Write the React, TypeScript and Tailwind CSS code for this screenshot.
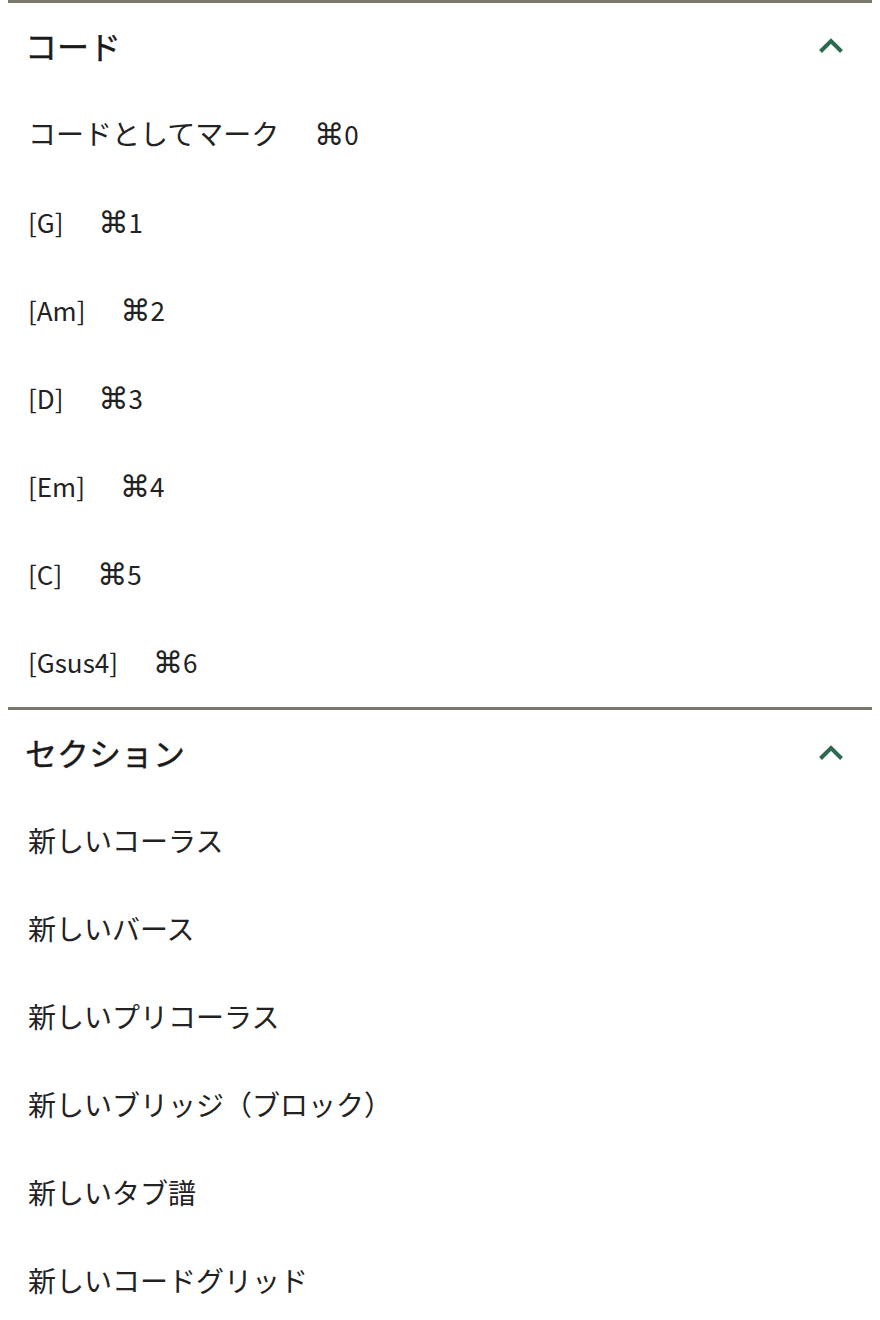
const chords = [
  { label: "コードとしてマーク", key: "0" },
  { label: "[G]", key: "1" },
  { label: "[Am]", key: "2" },
  { label: "[D]", key: "3" },
  { label: "[Em]", key: "4" },
  { label: "[C]", key: "5" },
  { label: "[Gsus4]", key: "6" },
];

const sections = [
  "新しいコーラス",
  "新しいバース",
  "新しいプリコーラス",
  "新しいブリッジ（ブロック）",
  "新しいタブ譜",
  "新しいコードグリッド",
];

function ChevronUp() {
  return (
    <svg width="26" height="17" viewBox="0 0 26 17" fill="none">
      <path d="M2.5 14.5 L13 4 L23.5 14.5" stroke="#2b6a4c" strokeWidth="4" strokeLinejoin="miter" />
    </svg>
  );
}

function Section({ title, children }: { title: string; children: React.ReactNode }) {
  return (
    <section className="border-t-[3px] border-[#7b776e]">
      <div className="flex h-[88px] items-center justify-between pb-1 pl-[17px] pr-7">
        <h2 className="text-[32px] font-normal text-[#1a1a1a] [-webkit-text-stroke:0.4px_#1a1a1a]">{title}</h2>
        <ChevronUp />
      </div>
      <ul>{children}</ul>
    </section>
  );
}

export default function App() {
  return (
    <div
      className="min-h-[1320px] bg-white px-2 text-[#222]"
      style={{ fontFamily: '"Noto Sans CJK JP", "Noto Sans", sans-serif' }}
    >
      <Section title="コード">
        {chords.map((c, i) => (
          <li key={c.key} className="flex h-[88px] items-center gap-[35px] pb-1 pl-5">
            <span className={i === 0 ? "text-[28px]" : "text-[26px]"}>{c.label}</span>
            <span className="flex items-center text-[26px]">
              <span className="translate-y-[2px] font-['DejaVu_Sans'] text-[30px] leading-none">⌘</span>
              <span>{c.key}</span>
            </span>
          </li>
        ))}
      </Section>
      <Section title="セクション">
        {sections.map((s) => (
          <li key={s} className="flex h-[88px] items-center pb-1 pl-5 text-[28px]">
            {s}
          </li>
        ))}
      </Section>
    </div>
  );
}
